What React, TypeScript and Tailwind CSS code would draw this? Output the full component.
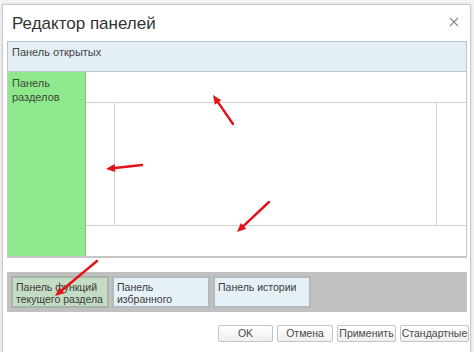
import React from 'react';

const font = { fontFamily: '"Liberation Sans", Arial, sans-serif' };

type Arrow = { x1: number; y1: number; x2: number; y2: number };

// annotation arrows drawn over the dialog (tail -> tip)
const arrows: Arrow[] = [
  { x1: 233, y1: 124, x2: 213, y2: 95 },
  { x1: 142, y1: 165, x2: 106, y2: 169 },
  { x1: 269, y1: 202, x2: 237, y2: 232 },
  { x1: 97, y1: 261, x2: 55, y2: 296 },
];

function Arrows() {
  return (
    <svg className="absolute inset-0 pointer-events-none" width={474} height={352}>
      {arrows.map((a, i) => {
        const ang = Math.atan2(a.y2 - a.y1, a.x2 - a.x1);
        const len = 9;
        const w = 4;
        const bx = a.x2 - Math.cos(ang) * len;
        const by = a.y2 - Math.sin(ang) * len;
        const px = -Math.sin(ang) * w;
        const py = Math.cos(ang) * w;
        return (
          <g key={i}>
            <line x1={a.x1} y1={a.y1} x2={bx} y2={by} stroke="#e3131b" strokeWidth={2.4} strokeLinecap="round" />
            <polygon points={`${a.x2},${a.y2} ${bx + px},${by + py} ${bx - px},${by - py}`} fill="#e3131b" />
          </g>
        );
      })}
    </svg>
  );
}

function Btn({ label, w }: { label: string; w: string }) {
  return (
    <button className={`${w} h-[17px] flex items-center justify-center whitespace-nowrap rounded-[2px] border border-[#c4c4c4] bg-gradient-to-b from-white to-[#efefef] text-[10.5px] leading-none text-[#4a4a4a]`}>
      {label}
    </button>
  );
}

function Slot({ children, green }: { children: React.ReactNode; green?: boolean }) {
  return (
    <div
      className={`w-[98px] border-2 px-[3px] pt-[3px] whitespace-nowrap text-[10.5px] leading-[12px] text-[#3a3a3a] ${
        green ? 'border-[#a9b3a9] bg-[#c5dcc4]' : 'border-[#b3b9bd] bg-[#e6f1f7]'
      }`}
    >
      {children}
    </div>
  );
}

export default function App() {
  return (
    <div className="relative w-[474px] h-[352px] overflow-hidden bg-[#f3f3f3]" style={font}>
      <div className="pt-[4px] pl-[2px]">
        <div className="w-[469px] h-[360px] border border-[#c9c9c9] bg-white shadow-[0_0_3px_rgba(0,0,0,0.12)] flex flex-col">
          {/* header */}
          <div className="h-[36px] flex items-center justify-between pl-[9px] pr-[11px]">
            <span className="text-[17px] text-[#333] leading-none mt-[1px]">Редактор панелей</span>
            <svg width="10" height="10" viewBox="0 0 10 10" className="mb-[2px]">
              <path d="M1 1 L9 9 M9 1 L1 9" stroke="#8a8a8a" strokeWidth="1.1" />
            </svg>
          </div>

          <div className="pl-[4px] pr-[3px] flex flex-col">
            {/* top panel */}
            <div className="h-[31px] border border-[#b9c6cf] bg-[#e3eef5] px-[4px] pt-[5px] text-[11px] leading-none text-[#444]">
              Панель открытых
            </div>

            {/* middle */}
            <div className="h-[186px] flex border-x border-b-2 border-[#c6c6c6]">
              <div className="w-[78px] bg-[#90e88c] border-r border-[#7cc47a] px-[4px] pt-[4px] text-[11px] leading-[14px] text-[#3a4a3a]">
                Панель
                <br />
                разделов
              </div>
              <div className="flex-1 flex flex-col">
                <div className="h-[31px] border-b border-[#d2d2d2]" />
                <div className="flex-1 flex">
                  <div className="w-[29px] border-r border-[#d2d2d2]" />
                  <div className="flex-1" />
                  <div className="w-[30px] border-l border-[#d2d2d2]" />
                </div>
                <div className="h-[31px] border-t border-[#d2d2d2]" />
              </div>
            </div>

            {/* bottom panels */}
            <div className="mt-[14px] h-[40px] bg-[#c0c0c0] px-[4px] py-[4px] flex gap-[3px]">
              <Slot green>
                Панель функций
                <br />
                текущего раздела
              </Slot>
              <Slot>
                Панель
                <br />
                избранного
              </Slot>
              <Slot>Панель истории</Slot>
            </div>

            {/* buttons */}
            <div className="mt-[13px] flex justify-end gap-[4px] -mr-[2px]">
              <Btn label="OK" w="w-[55px]" />
              <Btn label="Отмена" w="w-[56px]" />
              <Btn label="Применить" w="w-[59px]" />
              <Btn label="Стандартные" w="w-[69px]" />
            </div>
          </div>
        </div>
      </div>
      <Arrows />
    </div>
  );
}
